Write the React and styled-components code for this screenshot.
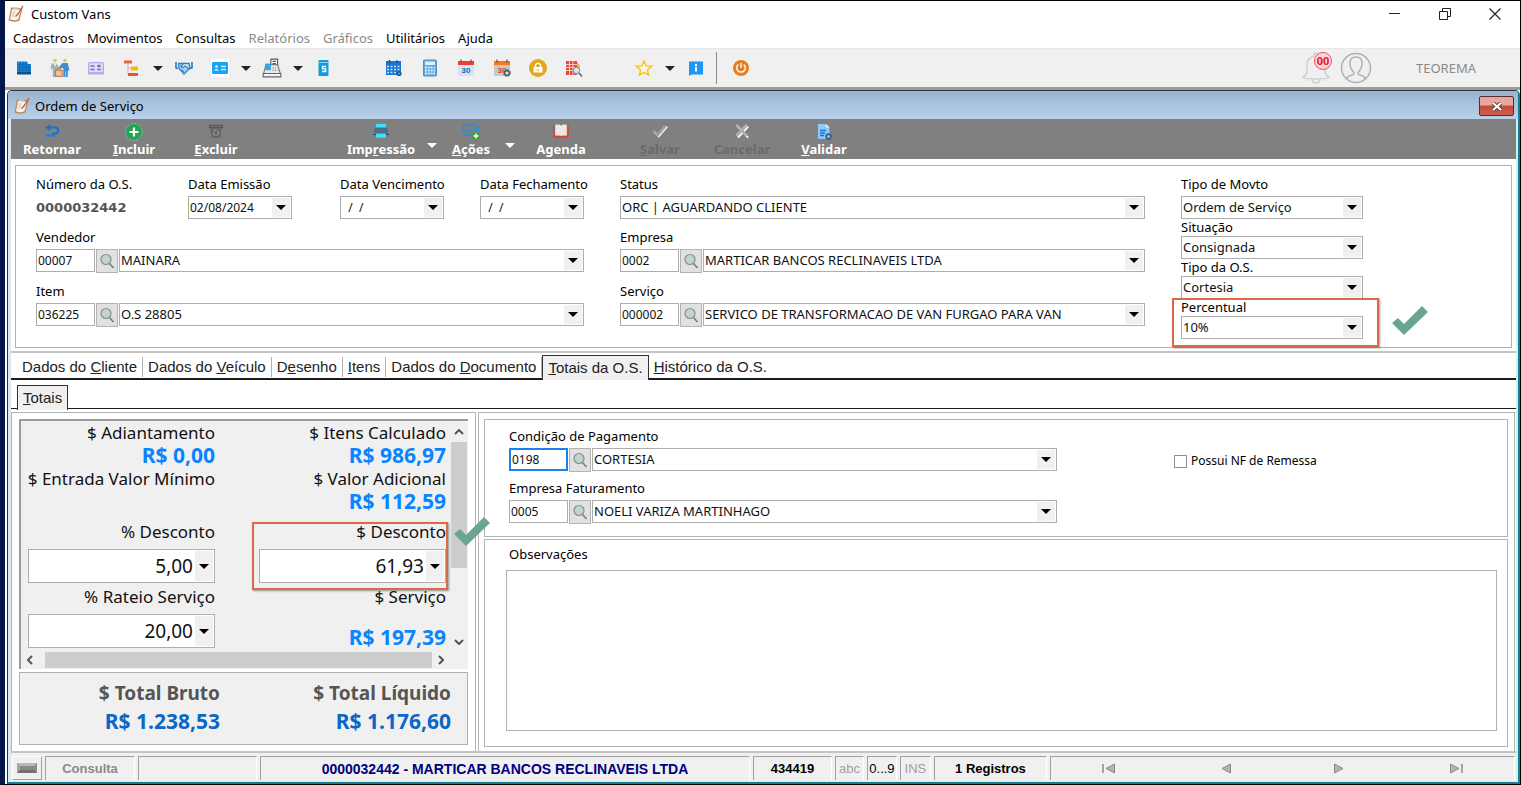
import React, { useState } from "react"
import styled, { createGlobalStyle, css } from "styled-components"

const ui = `"Noto Sans", "Open Sans", sans-serif`
const wide = `"DejaVu Sans", Verdana, sans-serif`
const sans = `"Liberation Sans", Arial, sans-serif`

// "&Incluir" -> underlined shortcut letter
const Accel = ({ text }) => {
  const i = text.indexOf("&")
  if (i < 0) return text
  return (
    <>
      {text.slice(0, i)}
      <u>{text[i + 1]}</u>
      {text.slice(i + 2)}
    </>
  )
}

const Icon = ({ size = 18, children, ...rest }) => (
  <svg width={size} height={size} viewBox="0 0 18 18" fill="none" aria-hidden="true" {...rest}>
    {children}
  </svg>
)

const NotepadIcon = () => (
  <Icon>
    <path d="M4 2.5 15.5 3.5 12.5 15.5 8 17 1.5 15.5Z" fill="#b98a55" />
    <path d="M5 4 14 4.5 11.5 14 8.5 15.5 3 14.5Z" fill="#f7f2ea" />
    <path d="M6.5 2 11 2.6 10.4 4.6 6 4.2Z" fill="#c9c4bb" />
    <path d="M16 1 11 9 8.5 11.5" stroke="#c05a3c" strokeWidth="1.3" />
    <path d="M5.5 7h3M5 9h3M4.6 11h3" stroke="#c9b8b0" strokeWidth=".8" />
  </Icon>
)
const BuildingIcon = () => (
  <Icon>
    <path d="M2 2.5h10l1 2.5h3v10H2Z" fill="#1b86d8" />
    <path d="M2 13h14v2.500H2Z" fill="#0c4f88" />
    <path d="M2 6h12M2 8.500h14M2 11h14M5 3v11M8 3v11M11 3v11M14 5v9" stroke="#0d62ab" strokeWidth=".8" />
  </Icon>
)
const PeopleIcon = () => (
  <Icon size={20}>
    <circle cx="4.500" cy="2.200" r="1.600" fill="#e2bd7a" />
    <circle cx="13.500" cy="2.200" r="1.600" fill="#e2bd7a" />
    <path d="M1.500 5H6l2 3 2.500-3h1l-2.500 4.500H7V17H5v-5h-.500v5h-2V9L1 10.500.500 9Z" fill="#9fb0a8" />
    <path d="M3.500 5 4.500 8 6 5Z" fill="#f2f6f5" />
    <path d="M11.500 4.500h4.500L17.500 11l-1.500.500V17h-2v-5h-.500v5h-1.500V9L9 9.500 8.500 8Z" fill="#3b8fd6" />
    <rect x="5" y="11" width="6" height="5.500" fill="#f0c39c" stroke="#c07a50" />
    <path d="M7 11V9.500h2V11" stroke="#c07a50" />
  </Icon>
)
const CardIcon = () => (
  <Icon>
    <rect x="1" y="3" width="16" height="12.5" rx="1.5" fill="#b5a8e4" />
    <rect x="2.2" y="4.2" width="13.6" height="9" fill="#e2dcfa" />
    <path d="M3.5 7h4M3.5 10.500h4M10 7h4M10 10.500h4M12 5.500v3" stroke="#7d6bc0" strokeWidth="1.4" />
  </Icon>
)
const TreeIcon = () => (
  <Icon>
    <path d="M5 5v10h4M5 9h4" stroke="#e0a9a0" />
    <rect x="1" y="1.500" width="8" height="3" fill="#f0632d" />
    <rect x="8" y="7.500" width="7" height="4" fill="#f2b90f" />
    <rect x="5" y="14" width="10" height="3" fill="#f0532d" />
  </Icon>
)
const HandshakeIcon = () => (
  <Icon>
    <path d="M1 3v6l2 .5M17 3v6l-2 .5" stroke="#2f76b8" strokeWidth="1.600" />
    <path d="M3.500 4.500h5L6 7.500l1.500 1 3-1.500 3.500 3-5 5-5-5.500Z" fill="#a8cdf0" stroke="#2f80c6" strokeWidth="1.300" />
    <path d="M8.500 4.500h5.500l1 5-1.500 1M6.500 11l2 2" stroke="#2f80c6" strokeWidth="1.500" />
  </Icon>
)
const IdIcon = () => (
  <Icon>
    <rect width="18" height="18" fill="#fff" />
    <rect x="1" y="3" width="16" height="12" rx="1" fill="#16a5f3" />
    <path d="M10 7.500h5M10 10.500h5" stroke="#cdeafd" strokeWidth="1.300" />
    <circle cx="5.500" cy="7.500" r="1.300" fill="#fff" />
    <path d="M3 11.500q2.500-3 5 0Z" fill="#fff" />
  </Icon>
)
const RegisterIcon = () => (
  <Icon size={20}>
    <path d="M8 1h6v6H8Z" fill="#fff" stroke="#555" />
    <path d="M9.500 3h3M9.500 5h3" stroke="#555" />
    <path d="M3.500 6H14l2.500 8h-15Z" fill="#e9e9e9" stroke="#777" />
    <path d="M3 5h5v6H3Z" fill="#3aa0e8" />
    <path d="M9.500 9h4M9.500 11h4.500" stroke="#777" strokeDasharray="1 1" />
    <path d="M1 14h16v3H1Z" fill="#f5f5f5" stroke="#666" />
  </Icon>
)
const BookSIcon = () => (
  <Icon>
    <rect x="3.500" y="1" width="10" height="16" rx="1" fill="#169bd9" />
    <path d="M3.500 3.500h10" stroke="#86d0f2" />
    <path d="M11 7.500H7.500v2.300h3.200V12.500H7" stroke="#fff" strokeWidth="1.300" />
  </Icon>
)
const GridIcon = () => (
  <Icon>
    <rect x="1" y="2" width="15" height="14" fill="#1976d2" />
    <path d="M2 7.500h13M2 10.500h13M2 13.500h13" stroke="#c6e2fa" strokeWidth="1.500" strokeDasharray="2 1.500" />
    <path d="M4.500 1v3M12 1v3" stroke="#0b4f98" strokeWidth="1.200" />
    <circle cx="14" cy="14.500" r="2.600" fill="#1c5f86" />
    <circle cx="14" cy="14.500" r=".8" fill="#9dd4ef" />
  </Icon>
)
const CalcIcon = () => (
  <Icon>
    <rect x="2.500" y="1" width="13" height="16" rx="1" fill="#5aa9e0" stroke="#4a94cc" />
    <rect x="4" y="2.500" width="10" height="3.500" fill="#dff0fb" />
    <path d="M4 8.500h10M4 11.500h10M4 14.500h10" stroke="#d4ebf9" strokeWidth="2" strokeDasharray="2 .8" />
    <path d="M12.500 6.500v2" stroke="#c9566b" />
  </Icon>
)
const DayText = styled.text`
  font: 700 8px ${sans};
`
const CalendarIcon = ({ top = "#ee4035", sheet = "#cfe6fa", ink = "#1a66ad", gear }) => (
  <Icon>
    <rect x="1" y="2" width="16" height="15" rx="1" fill={sheet} />
    <rect x="1" y="2" width="16" height="4" fill={top} />
    <path d="M4 .5v3M14 .5v3" stroke="#8a3e33" strokeWidth="1.200" />
    <DayText x="4.500" y="14" fill={ink}>30</DayText>
    {gear && (
      <>
        <circle cx="14" cy="14" r="2.400" stroke="#47626b" strokeWidth="1.600" fill="#dfe8ea" />
        <circle cx="14" cy="14" r="3.500" stroke="#47626b" strokeDasharray="1.400 1.400" />
      </>
    )}
  </Icon>
)
const LockIcon = () => (
  <Icon>
    <circle cx="9" cy="9" r="9" fill="#e3a71c" />
    <rect x="4.500" y="8" width="9" height="5.500" fill="#fff" />
    <path d="M6.500 8V6q2.500-3.500 5 0v2" stroke="#fff" strokeWidth="1.400" />
    <path d="M9 10v2" stroke="#e3a71c" strokeWidth="1.200" />
  </Icon>
)
const TableSearchIcon = () => (
  <Icon>
    <path d="M10 3q4 0 5 5l-1 5h-4Z" fill="#f0b21c" />
    <rect x="1" y="2" width="11" height="14" fill="#e5483d" />
    <path d="M1 5.500h11M1 8.500h11M1 11.500h11M4.500 2v14M8 2v14" stroke="#fbd5d1" strokeWidth=".9" />
    <circle cx="11.500" cy="11.500" r="3.200" fill="#cfe7f7" stroke="#6d8ea3" />
    <path d="m14 14 3 3.500" stroke="#54616a" strokeWidth="1.500" />
  </Icon>
)
const StarIcon = () => (
  <Icon>
    <path d="m9 2 2.100 4.900 5.300.5-4 3.500 1.200 5.200L9 13.400l-4.600 2.700 1.200-5.200-4-3.500 5.300-.5Z" fill="#fffbe8" stroke="#fbbf1e" strokeWidth="1.400" />
  </Icon>
)
const InfoIcon = () => (
  <Icon>
    <path d="M2 2.500h14v13H4.500L2 17Z" fill="#2196f3" />
    <path d="M9 8v4.500" stroke="#fff" strokeWidth="2" />
    <rect x="8" y="5" width="2" height="2" fill="#fff" />
  </Icon>
)
const PowerIcon = () => (
  <Icon>
    <circle cx="9" cy="9" r="8" fill="#e67e22" />
    <path d="M6.300 5.500a4.300 4.300 0 1 0 5.400 0M9 4v5" stroke="#fff" strokeWidth="1.400" />
  </Icon>
)
const BellIcon = () => (
  <svg width="28" height="32" viewBox="0 0 28 32" fill="none" aria-hidden="true">
    <path d="M12 4q0-3 2-3t2 3q7 2 7 9v6q0 4 4 6-1 2-13 2T1 25q4-2 4-6v-6Q5 6 12 4Z" stroke="#cfcfcf" strokeWidth="1.500" />
    <path d="M10 27q0 4 4 4t4-4" stroke="#cfcfcf" strokeWidth="1.500" />
  </svg>
)
const UserIcon = () => (
  <svg width="32" height="32" viewBox="0 0 32 32" fill="none" aria-hidden="true">
    <circle cx="16" cy="16" r="14.500" stroke="#a9b3b4" strokeWidth="1.500" />
    <path d="M7 27q0-3 5-4 3-.5 1.500-3-3.500-3.500-3.500-9 0-6 6-6t6 6q0 5.500-3.500 9-1.500 2.500 1.500 3 5 1 5 4" stroke="#a9b3b4" strokeWidth="1.500" />
  </svg>
)

const ReturnIcon = () => (
  <Icon size={16}>
    <path d="M3 5h10q3 0 3 3.500T12 12H9" stroke="#1673d0" strokeWidth="2.400" />
    <path d="M7 1v8L1.500 5Z" fill="#1673d0" />
    <path d="M2 14h10" stroke="#1673d0" strokeWidth="3" strokeDasharray="1.200 1" />
  </Icon>
)
const AddIcon = () => (
  <Icon>
    <circle cx="9" cy="9" r="8.300" fill="#23a455" stroke="#b5d9c1" strokeDasharray="1 1.500" />
    <path d="M9 4.500v9M4.500 9h9" stroke="#fff" strokeWidth="2.200" />
  </Icon>
)
const TrashIcon = () => (
  <Icon size={16}>
    <path d="M1 2h16v4H1Z" fill="#555" />
    <path d="M2.500 6h13l-1.500 11H4Z" fill="#676767" />
    <circle cx="9" cy="11" r="3" stroke="#9c9c9c" strokeWidth="1.200" strokeDasharray="4 1.200" />
    <path d="M2.500 4h13" stroke="#808080" />
  </Icon>
)
const PrinterIcon = () => (
  <Icon size={16}>
    <rect x="3.500" y="1" width="11" height="4" fill="#40e0ff" />
    <rect x="1.500" y="5.500" width="15" height="6.500" fill="#46708c" />
    <path d="M0 13h18" stroke="#173e58" />
    <rect x="3.500" y="12" width="11" height="4.500" fill="#40e0ff" />
  </Icon>
)
const ActionsIcon = () => (
  <Icon>
    <rect x="1" y="2" width="13" height="6" rx="1.500" stroke="#2f8bd8" strokeWidth="1.500" />
    <path d="M3.500 8.500v2q0 1.500 1.500 1.500h6M14 4.500h2.500V9" stroke="#2f8bd8" strokeWidth="1.500" />
    <circle cx="14" cy="13" r="4" fill="#3c9f43" />
    <path d="M14 10.500v5M11.500 13h5" stroke="#fff" strokeWidth="1.400" />
  </Icon>
)
const BookIcon = () => (
  <Icon size={16}>
    <path d="M1 3v12.500h7l1 1 1-1h7V3" stroke="#d9402f" strokeWidth="1.500" />
    <path d="M2.500 2q5-1 6.500 1 1.500-2 6.500-1v12H10l-1 1-1-1H2.500Z" fill="#efe9e4" />
  </Icon>
)
const SaveIcon = () => (
  <Icon size={16}>
    <path d="M3 10.500 7.500 15 17 4" stroke="#fff" strokeWidth="2" />
    <path d="M1.500 9 6.500 13.500 15 3.500" stroke="#a3a3a3" strokeWidth="3" />
  </Icon>
)
const CancelIcon = () => (
  <Icon size={16}>
    <path d="m4 4 12 12.500M16 4 4.500 16.500" stroke="#fff" strokeWidth="2" />
    <path d="m2.500 2 12 12.500M14.500 2 2.500 14.500" stroke="#b0b0b0" strokeWidth="3" />
  </Icon>
)
const ValidateIcon = () => (
  <Icon>
    <path d="M3 1h8l3.500 3.500V16H3Z" fill="#90c8f8" />
    <path d="M11 1v3.500h3.500Z" fill="#dff0ff" />
    <path d="M5 7.500h6M5 10h5M5 12.500h4" stroke="#1a72c4" strokeWidth="1.300" />
    <circle cx="13.500" cy="13.500" r="2.400" stroke="#2f6386" strokeWidth="1.600" fill="#7fc0ea" />
  </Icon>
)
const SearchIcon = () => (
  <Icon>
    <circle cx="8" cy="7.500" r="5" fill="#c3d3d4" stroke="#84908f" strokeWidth="1.200" />
    <path d="m11.500 11.500 4 4.500" stroke="#808080" strokeWidth="1.800" />
  </Icon>
)
const KeyboardIcon = () => (
  <svg width="20" height="10" viewBox="0 0 20 10" aria-hidden="true">
    <rect width="20" height="10" fill="#8a8a8a" />
    <path d="M0 0h20l-3 3H3Z" fill="#b9b9b9" />
    <path d="M0 0v10l3-3V3Z" fill="#a6a6a6" />
    <path d="M3 7h14l3 3H0Z" fill="#707070" />
  </svg>
)
const CheckMark = styled(({ className }) => (
  <svg className={className} width="38" height="32" viewBox="0 0 38 32" aria-hidden="true">
    <path d="m1 18 6-5 6 6L31 1l6 6-24 23Z" fill="#69a592" />
  </svg>
))`
  position: absolute;
  z-index: 3;
`
const NavGlyph = ({ flip, bar }) => (
  <svg width="14" height="11" viewBox="0 0 14 11" transform={flip ? "scale(-1 1)" : undefined} aria-hidden="true">
    {bar && <path d="M1 1v9" stroke="#8a8a8a" strokeWidth="1.500" />}
    <path d="M12.500 1v9L4 5.500Z" fill="#b4b4b4" stroke="#8a8a8a" />
  </svg>
)

const Caret = styled.span`
  width: 0;
  height: 0;
  border: 5px solid transparent;
  border-top-color: ${p => p.$color || "#000"};
  border-bottom: 0;
`

const MENUS = ["Cadastros", "Movimentos", "Consultas", "Relatórios", "Gráficos", "Utilitários", "Ajuda"]
const MENUS_OFF = ["Relatórios", "Gráficos"]

const TOOLS = [
  [
    { name: "Empresas", icon: <BuildingIcon /> },
    { name: "Clientes", icon: <PeopleIcon /> },
    { name: "Cartões", icon: <CardIcon /> },
    { name: "Estrutura", icon: <TreeIcon />, split: true },
    { name: "Negociações", icon: <HandshakeIcon /> },
    { name: "Identificação", icon: <IdIcon />, split: true },
    { name: "Caixa", icon: <RegisterIcon />, split: true },
    { name: "Serviços", icon: <BookSIcon /> },
  ],
  [
    { name: "Planilha", icon: <GridIcon /> },
    { name: "Calculadora", icon: <CalcIcon /> },
    { name: "Calendário", icon: <CalendarIcon /> },
    { name: "Agendamentos", icon: <CalendarIcon top="#f07a1c" sheet="#c9c9c9" ink="#e0402c" gear /> },
    { name: "Bloquear", icon: <LockIcon /> },
    { name: "Pesquisar tabela", icon: <TableSearchIcon /> },
  ],
  [
    { name: "Favoritos", icon: <StarIcon />, split: true },
    { name: "Informações", icon: <InfoIcon /> },
  ],
]

const ACTIONS = [
  [
    { text: "Retornar", icon: <ReturnIcon /> },
    { text: "&Incluir", icon: <AddIcon /> },
    { text: "&Excluir", icon: <TrashIcon /> },
  ],
  [
    { text: "Imp&ressão", icon: <PrinterIcon />, split: true },
    { text: "&Ações", icon: <ActionsIcon />, split: true, narrow: true },
    { text: "Agenda", icon: <BookIcon /> },
  ],
  [
    { text: "&Salvar", icon: <SaveIcon />, disabled: true },
    { text: "Cancelar", icon: <CancelIcon />, disabled: true },
    { text: "&Validar", icon: <ValidateIcon /> },
  ],
]

const TABS = [
  "Dados do &Cliente",
  "Dados do &Veículo",
  "D&esenho",
  "&Itens",
  "Dados do &Documento",
  "&Totais da O.S.",
  "&Histórico da O.S.",
]

const Select = ({ id, value }) => (
  <SelectBox>
    <select id={id} defaultValue={value}>
      <option>{value}</option>
    </select>
    <ArrowCell as="span">
      <Caret />
    </ArrowCell>
  </SelectBox>
)

const Combo = ({ id, value, large }) => (
  <ComboBox $large={large}>
    <input id={id} defaultValue={value} />
    <ArrowCell type="button" aria-label="Abrir">
      <Caret />
    </ArrowCell>
  </ComboBox>
)

const Lookup = ({ id, label, code, value, focused }) => (
  <Field>
    <label htmlFor={id}>{label}</label>
    <LookupRow>
      <CodeInput id={id} defaultValue={code} $focused={focused} />
      <SearchButton type="button" aria-label={`Pesquisar ${label}`}>
        <SearchIcon />
      </SearchButton>
      <SelectBox>
        <select aria-label={label} defaultValue={value}>
          <option>{value}</option>
        </select>
        <ArrowCell as="span">
          <Caret />
        </ArrowCell>
      </SelectBox>
    </LookupRow>
  </Field>
)

const App = () => {
  const [tab, setTab] = useState("&Totais da O.S.")

  return (
    <Desktop>
      <GlobalStyle />
      <TitleBar>
        <NotepadIcon />
        <h1>Custom Vans</h1>
        <WindowButtons>
          <button aria-label="Minimizar">
            <svg width="12" height="12" viewBox="0 0 12 12"><path d="M0 5.500h11" stroke="#222" /></svg>
          </button>
          <button aria-label="Restaurar">
            <svg width="12" height="12" viewBox="0 0 12 12" fill="none" stroke="#222">
              <path d="M.5 3.500h8v8h-8ZM3.500 3V.500h8v8H9" />
            </svg>
          </button>
          <button aria-label="Fechar">
            <svg width="12" height="12" viewBox="0 0 12 12"><path d="m.5.500 11 11M11.500.500l-11 11" stroke="#222" strokeWidth="1.200" /></svg>
          </button>
        </WindowButtons>
      </TitleBar>
      <MenuBar>
        {MENUS.map(m => (
          <button key={m} disabled={MENUS_OFF.includes(m)}>{m}</button>
        ))}
      </MenuBar>
      <Toolbar>
        {TOOLS.map((group, i) => (
          <ToolGroup key={i}>
            {group.map(t => (
              <React.Fragment key={t.name}>
                <ToolButton aria-label={t.name}>{t.icon}</ToolButton>
                {t.split && (
                  <SplitButton aria-label={`Opções de ${t.name}`}>
                    <Caret $color="#222" />
                  </SplitButton>
                )}
              </React.Fragment>
            ))}
          </ToolGroup>
        ))}
        <Divider />
        <ToolButton aria-label="Sair"><PowerIcon /></ToolButton>
        <Account>
          <BellButton aria-label="Notificações">
            <BellIcon />
            <Badge>00</Badge>
          </BellButton>
          <UserIcon />
          <span>TEOREMA</span>
        </Account>
      </Toolbar>

      <ChildWindow>
        <ChildTitle>
          <NotepadIcon />
          <h2>Ordem de Serviço</h2>
          <CloseButton aria-label="Fechar janela">
            <svg width="12" height="9" viewBox="0 0 12 9">
              <path d="m2 1 8 7M10 1 2 8" stroke="#5b3a3a" strokeWidth="4" />
              <path d="m2 1 8 7M10 1 2 8" stroke="#fff" strokeWidth="2.200" />
            </svg>
          </CloseButton>
        </ChildTitle>
        <ActionBar>
          {ACTIONS.map((group, i) => (
            <ActionGroup key={i}>
              {group.map(a => (
                <React.Fragment key={a.text}>
                  <ActionButton disabled={a.disabled} $narrow={a.narrow}>
                    {a.icon}
                    <span><Accel text={a.text} /></span>
                  </ActionButton>
                  {a.split && (
                    <ActionSplit aria-label="Mais opções"><Caret $color="#fff" /></ActionSplit>
                  )}
                </React.Fragment>
              ))}
            </ActionGroup>
          ))}
        </ActionBar>

        <Header>
          <HeaderForm>
            <Stack>
              <DateRow>
                <Field>
                  <label htmlFor="numero">Número da O.S.</label>
                  <OrderNumber id="numero">0000032442</OrderNumber>
                </Field>
                <Field>
                  <label htmlFor="emissao">Data Emissão</label>
                  <Combo id="emissao" value="02/08/2024" />
                </Field>
                <Field>
                  <label htmlFor="vencimento">Data Vencimento</label>
                  <Combo id="vencimento" value="  /  /" />
                </Field>
                <Field>
                  <label htmlFor="fechamento">Data Fechamento</label>
                  <Combo id="fechamento" value="  /  /" />
                </Field>
              </DateRow>
              <Lookup id="vendedor" label="Vendedor" code="00007" value="MAINARA" />
              <Lookup id="item" label="Item" code="036225" value="O.S 28805" />
            </Stack>
            <Stack>
              <Field>
                <label htmlFor="status">Status</label>
                <Select id="status" value="ORC | AGUARDANDO CLIENTE" />
              </Field>
              <Lookup id="empresa" label="Empresa" code="0002" value="MARTICAR BANCOS RECLINAVEIS LTDA" />
              <Lookup id="servico" label="Serviço" code="000002" value="SERVICO DE TRANSFORMACAO DE VAN FURGAO PARA VAN" />
            </Stack>
            <TypeColumn>
              <Field>
                <label htmlFor="movto">Tipo de Movto</label>
                <Select id="movto" value="Ordem de Serviço" />
              </Field>
              <Field $compact>
                <label htmlFor="situacao">Situação</label>
                <Select id="situacao" value="Consignada" />
              </Field>
              <Field $compact>
                <label htmlFor="tipo">Tipo da O.S.</label>
                <Select id="tipo" value="Cortesia" />
              </Field>
              <Field $compact>
                <label htmlFor="percentual">Percentual</label>
                <Select id="percentual" value="10%" />
                <PercentMark />
                <PercentCheck />
              </Field>
            </TypeColumn>
          </HeaderForm>
        </Header>

        <Tabs role="tablist">
          {TABS.map(t => (
            <Tab key={t} role="tab" aria-selected={t === tab} $active={t === tab} onClick={() => setTab(t)}>
              <Accel text={t} />
            </Tab>
          ))}
        </Tabs>
        <SubTabs role="tablist">
          <Tab role="tab" aria-selected $active><Accel text="&Totais" /></Tab>
        </SubTabs>

        <Content>
          <Side>
            <ScrollBox>
              <Amounts>
                <Amount>
                  <span>$ Adiantamento</span>
                  <strong>R$ 0,00</strong>
                </Amount>
                <Amount>
                  <span>$ Itens Calculado</span>
                  <strong>R$ 986,97</strong>
                </Amount>
                <Amount>
                  <span>$ Entrada Valor Mínimo</span>
                </Amount>
                <Amount>
                  <span>$ Valor Adicional</span>
                  <strong>R$ 112,59</strong>
                </Amount>
                <Amount>
                  <label htmlFor="pdesc">% Desconto</label>
                  <Combo id="pdesc" value="5,00" large />
                </Amount>
                <Amount>
                  <label htmlFor="vdesc">$ Desconto</label>
                  <Combo id="vdesc" value="61,93" large />
                  <DiscountMark />
                  <DiscountCheck />
                </Amount>
                <Amount>
                  <label htmlFor="rateio">% Rateio Serviço</label>
                  <Combo id="rateio" value="20,00" large />
                </Amount>
                <Amount $bottom>
                  <span>$ Serviço</span>
                  <strong>R$ 197,39</strong>
                </Amount>
              </Amounts>
              <VScroll>
                <svg width="10" height="6" viewBox="0 0 10 6" fill="none"><path d="m1 5 4-4 4 4" stroke="#555" strokeWidth="2" /></svg>
                <i />
                <svg width="10" height="6" viewBox="0 0 10 6" fill="none"><path d="m1 1 4 4 4-4" stroke="#555" strokeWidth="2" /></svg>
              </VScroll>
              <HScroll>
                <svg width="6" height="10" viewBox="0 0 6 10" fill="none"><path d="M5 1 1 5l4 4" stroke="#555" strokeWidth="2" /></svg>
                <i />
                <svg width="6" height="10" viewBox="0 0 6 10" fill="none"><path d="m1 1 4 4-4 4" stroke="#555" strokeWidth="2" /></svg>
              </HScroll>
            </ScrollBox>
            <Totals>
              <div>
                <span>$ Total Bruto</span>
                <strong>R$ 1.238,53</strong>
              </div>
              <div>
                <span>$ Total Líquido</span>
                <strong>R$ 1.176,60</strong>
              </div>
            </Totals>
          </Side>
          <Main>
            <Payment>
              <PaymentFields>
                <Lookup id="cond" label="Condição de Pagamento" code="0198" value="CORTESIA" focused />
                <Lookup id="fat" label="Empresa Faturamento" code="0005" value="NOELI VARIZA MARTINHAGO" />
              </PaymentFields>
              <CheckLabel>
                <input type="checkbox" />
                Possui NF de Remessa
              </CheckLabel>
            </Payment>
            <Notes>
              <label htmlFor="obs">Observações</label>
              <textarea id="obs" />
            </Notes>
          </Main>
        </Content>

        <StatusBar>
          <StatusButton aria-label="Teclado"><KeyboardIcon /></StatusButton>
          <StatusCell $width="90px" $color="#8a8a8a">Consulta</StatusCell>
          <StatusCell $width="119px" />
          <StatusCell $grow={490} $color="#000080">0000032442 - MARTICAR BANCOS RECLINAVEIS LTDA</StatusCell>
          <StatusCell $width="79px">434419</StatusCell>
          <StatusCell $width="29px" $color="#a0a0a0" $light>abc</StatusCell>
          <StatusCell $width="30px" $light>0...9</StatusCell>
          <StatusCell $width="31px" $color="#a0a0a0" $light>INS</StatusCell>
          <StatusCell $width="113px">1 Registros</StatusCell>
          <Pager $grow={465}>
            <button aria-label="Primeiro"><NavGlyph bar /></button>
            <button aria-label="Anterior"><NavGlyph /></button>
            <button aria-label="Próximo"><NavGlyph flip /></button>
            <button aria-label="Último"><NavGlyph flip bar /></button>
          </Pager>
        </StatusBar>
      </ChildWindow>
    </Desktop>
  )
}

const GlobalStyle = createGlobalStyle`
  *, *::before, *::after {
    box-sizing: border-box;
  }
  body {
    margin: 0;
    background: #000;
    color: #000;
    font-family: ${ui};
    font-size: 13px;
  }
  h1, h2 {
    margin: 0;
    font-size: 13px;
    font-weight: 400;
  }
  button {
    padding: 0;
    border: 0;
    background: transparent;
    color: inherit;
    font: inherit;
  }
  input, select, textarea {
    font: inherit;
    color: #111;
    outline: 0;
  }
  svg {
    display: block;
    flex: none;
  }
`

const Desktop = styled.div`
  display: flex;
  flex-direction: column;
  min-height: 100vh;
  border: 1px solid #000;
  border-left: 5px solid #03164a;
  background: #fff;
`

const TitleBar = styled.header`
  display: flex;
  align-items: center;
  gap: 6px;
  height: 26px;
  padding-left: 2px;
`

const WindowButtons = styled.div`
  display: flex;
  margin-left: auto;
  button {
    display: grid;
    place-items: center;
    width: 50px;
    height: 24px;
  }
`

const MenuBar = styled.nav`
  display: flex;
  gap: 13px;
  height: 22px;
  padding: 0 8px;
  border-bottom: 1px solid #e8e8e8;
  button:disabled {
    color: #8a8a8a;
  }
`

const Toolbar = styled.div`
  display: flex;
  align-items: center;
  height: 41px;
  padding-left: 1px;
  border-bottom: 3px solid #9c9c9c;
  background: #f0f0f0;
`

const ToolGroup = styled.div`
  display: flex;
  & + & {
    margin-left: 34px;
  }
`

const ToolButton = styled.button`
  display: grid;
  place-items: center;
  width: 36px;
  height: 32px;
`

const SplitButton = styled(ToolButton)`
  width: 16px;
`

const Divider = styled.span`
  width: 1px;
  height: 32px;
  margin: 0 6px 0 2px;
  background: #8a8a8a;
`

const Account = styled.div`
  display: flex;
  align-items: center;
  gap: 10px;
  margin-left: auto;
  padding-right: 44px;
  color: #8a8a8a;
  > span {
    margin-left: 34px;
    line-height: 20px;
  }
`

const BellButton = styled.button`
  position: relative;
`

const Badge = styled.span`
  position: absolute;
  top: 0;
  right: -2px;
  display: grid;
  place-items: center;
  width: 18px;
  height: 18px;
  border: 1px solid #ef5350;
  border-radius: 50%;
  background: #f9d9d9;
  color: #f0123c;
  font-size: 11px;
  font-weight: 700;
  line-height: 16px;
`

const ChildWindow = styled.main`
  flex: 1;
  display: flex;
  flex-direction: column;
  margin-left: 2px;
  border: 1px solid #333;
  border-right: 2px solid #14808f;
  border-bottom: 2px solid #14808f;
  border-radius: 5px 5px 0 0;
  padding: 0 2px 1px 3px;
  background: #dbe9f7;
`

const ChildTitle = styled.div`
  display: flex;
  align-items: center;
  gap: 4px;
  height: 28px;
  margin: 0 -2px 0 -3px;
  padding: 2px 4px 0 5px;
  border-radius: 4px 4px 0 0;
  background: linear-gradient(#99b4d1, #b9d1ea);
`

const CloseButton = styled.button`
  display: grid;
  place-items: center;
  width: 35px;
  height: 20px;
  margin-left: auto;
  border: 1px solid #5a2a2f;
  border-radius: 2px;
  background: linear-gradient(#e6a79c 0 45%, #c04a35 50%, #d2604c);
`

const ActionBar = styled.div`
  display: flex;
  height: 40px;
  background: #808080;
  color: #fff;
`

const ActionGroup = styled.div`
  display: flex;
  & + & {
    margin-left: 83px;
  }
  & + & + & {
    margin-left: 17px;
  }
`

const ActionButton = styled.button`
  display: flex;
  flex-direction: column;
  align-items: center;
  justify-content: space-between;
  width: ${p => (p.$narrow ? 58 : 82)}px;
  padding: 4px 0 2px;
  font: 700 13px/16px ${ui};
  &:disabled {
    color: #6b6b6b;
  }
`

const ActionSplit = styled.button`
  display: grid;
  place-items: center;
  width: 20px;
  padding-top: 12px;
`

const Header = styled.section`
  padding: 6px 4px 3px 4px;
  border-bottom: 2px solid #c4c4c4;
  background: #fff;
`

const HeaderForm = styled.div`
  display: grid;
  grid-template-columns: minmax(0, 548fr) minmax(0, 525fr) 182px;
  gap: 36px;
  padding: 8px 148px 8px 20px;
  border: 1px solid #b0b0b0;
`

const Stack = styled.div`
  display: flex;
  flex-direction: column;
  gap: 8px;
`

const TypeColumn = styled(Stack)`
  gap: 0;
`

const DateRow = styled.div`
  display: grid;
  grid-template-columns: 152fr 152fr 140fr 104px;
`

const Field = styled.div`
  position: relative;
  label {
    display: block;
    margin-bottom: ${p => (p.$compact ? 0 : 2)}px;
    font: 13px/${p => (p.$compact ? 17 : 20)}px ${ui};
    white-space: nowrap;
  }
`

const OrderNumber = styled.output`
  display: block;
  color: #555;
  font: 700 13px/23px ${wide};
`

const ArrowCell = styled.button`
  display: grid;
  place-items: center;
  width: 18px;
  margin: 1px;
  background: #f0f0f0;
`

const SelectBox = styled.div`
  display: grid;
  height: 23px;
  border: 1px solid #adadad;
  background: #fff;
  select,
  > span {
    grid-area: 1 / 1;
  }
  select {
    min-width: 0;
    padding: 0 22px 2px 1px;
    border: 0;
    background: transparent;
    appearance: none;
    font-size: 13px;
  }
  > span {
    justify-self: end;
    pointer-events: none;
  }
`

const ComboBox = styled.div`
  display: flex;
  width: 104px;
  height: 23px;
  border: 1px solid #adadad;
  background: #fff;
  input {
    flex: 1;
    min-width: 0;
    padding: 0 1px;
    border: 0;
    font-size: 12px;
  }
  ${p =>
    p.$large &&
    css`
      width: 100%;
      height: 34px;
      input {
        font-size: 19px;
        text-align: right;
      }
    `}
`

const LookupRow = styled.div`
  display: grid;
  grid-template-columns: 59px 22px minmax(0, 1fr);
  gap: 1px;
`

const CodeInput = styled.input`
  min-width: 0;
  height: 23px;
  padding: 0 1px;
  border: 1px solid #adadad;
  font-size: 12px;
  ${p =>
    p.$focused &&
    css`
      border: 2px solid #1a7ff0;
    `}
`

const SearchButton = styled.button`
  display: grid;
  place-items: center;
  height: 24px;
  border: 1px solid #b4b4b4;
  background: #e1e1e1;
`

const Mark = styled.span`
  position: absolute;
  z-index: 2;
  border: 2px solid #dc6a49;
  box-shadow: 1px 1px 2px rgba(0, 0, 0, 0.4);
  pointer-events: none;
`

const PercentMark = styled(Mark)`
  inset: -1px -16px -8px -9px;
`

const PercentCheck = styled(CheckMark)`
  right: -66px;
  top: 6px;
`

const DiscountMark = styled(Mark)`
  inset: 2px -2px -5px -7px;
`

const DiscountCheck = styled(CheckMark)`
  right: -45px;
  top: -4px;
`

const Tabs = styled.div`
  display: flex;
  align-items: flex-end;
  height: 27px;
  padding-left: 6px;
  border-bottom: 2px solid #1c1c1c;
  background: #fff;
`

const Tab = styled.button`
  position: relative;
  height: 20px;
  margin-bottom: 1px;
  padding: 0 5px;
  border-right: 1px solid #b0b0b0;
  color: #222;
  font: 15px/20px ${sans};
  white-space: nowrap;
  &:last-child {
    border-right: 0;
  }
  ${p =>
    p.$active &&
    css`
      &,
      &:last-child {
        height: 25px;
        margin-bottom: -2px;
        border: 1px solid #333;
        border-bottom: 0;
        background: #f0f0f0;
      }
    `}
`

const SubTabs = styled(Tabs)`
  height: 29px;
  border-bottom-width: 1px;
`

const Content = styled.section`
  flex: 1;
  display: grid;
  grid-template-columns: 465px minmax(0, 1fr);
  gap: 2px;
  padding: 3px 1px 0 0;
  background: #fff;
`

const Side = styled.div`
  display: flex;
  flex-direction: column;
  gap: 3px;
  padding: 6px 7px;
  border: 1px solid #b4b4b4;
  border-bottom: 0;
`

const ScrollBox = styled.div`
  flex: 1;
  display: grid;
  grid-template-columns: 1fr 18px;
  grid-template-rows: 1fr 18px;
  border: 2px solid #9a9a9a;
  border-right: 0;
  border-bottom: 0;
  background: #f0f0f0;
`

const Amounts = styled.div`
  display: grid;
  grid-template-columns: 187px 187px;
  grid-template-rows: 46px 53px 65px 65px;
  column-gap: 44px;
  padding-left: 7px;
`

const Amount = styled.div`
  position: relative;
  display: flex;
  flex-direction: column;
  align-items: flex-end;
  color: #111;
  font: 17px/23px ${ui};
  white-space: nowrap;
  strong {
    margin-top: ${p => (p.$bottom ? 18 : 0)}px;
    color: #0a84ff;
    font: 700 21px/23px ${ui};
  }
  > div {
    margin-top: 6px;
  }
`

const VScroll = styled.div`
  display: grid;
  grid-template-rows: 21px 126px 1fr;
  justify-items: center;
  align-items: center;
  i {
    width: 16px;
    height: 100%;
    background: #cdcdcd;
  }
  svg:last-child {
    align-self: end;
    margin-bottom: 6px;
  }
`

const HScroll = styled.div`
  display: flex;
  align-items: center;
  gap: 6px;
  padding: 0 6px;
  i {
    flex: 1;
    height: 16px;
    margin-left: 6px;
    background: #cdcdcd;
  }
`

const Totals = styled.div`
  display: grid;
  grid-template-columns: 192px 1fr;
  padding: 6px 16px 9px 8px;
  border: 1px solid #b0b0b0;
  background: #f0f0f0;
  div {
    display: flex;
    flex-direction: column;
    align-items: flex-end;
    font: 700 19px/28px ${ui};
    color: #555;
  }
  strong {
    color: #0a66c8;
    font-size: 21px;
    font-weight: 700;
  }
`

const Main = styled.div`
  display: flex;
  flex-direction: column;
  gap: 2px;
  padding: 6px 6px 4px 5px;
  border: 1px solid #b4b4b4;
  border-bottom: 0;
`

const Payment = styled.div`
  display: grid;
  grid-template-columns: minmax(0, 548fr) minmax(0, 324fr);
  column-gap: 117px;
  padding: 6px 9px 12px 24px;
  border: 1px solid #b4b4b4;
`

const PaymentFields = styled(Stack)`
  gap: 6px;
`

const CheckLabel = styled.label`
  display: flex;
  align-items: center;
  align-self: start;
  gap: 4px;
  margin-top: 25px;
  font-size: 12px;
  line-height: 20px;
  input {
    width: 13px;
    height: 13px;
    margin: 0;
    border: 1px solid #8f8f8f;
    background: #fff;
    appearance: none;
  }
`

const Notes = styled.div`
  flex: 1;
  display: flex;
  flex-direction: column;
  gap: 6px;
  padding: 4px 10px 15px 21px;
  border: 1px solid #b4b4b4;
  label {
    padding-left: 3px;
    font: 13px/20px ${ui};
  }
  textarea {
    flex: 1;
    border: 1px solid #b0b0b0;
    resize: none;
  }
`

const StatusBar = styled.footer`
  display: flex;
  gap: 3px;
  height: 30px;
  padding: 3px 1px 1px 1px;
  border-top: 2px solid #c4c4c4;
  background: #f0f0f0;
`

const StatusButton = styled.button`
  display: grid;
  place-items: center;
  width: 30px;
  border: 1px solid #fff;
  border-right-color: #a0a0a0;
  border-bottom-color: #a0a0a0;
`

const StatusCell = styled.div`
  flex: ${p => (p.$grow ? `${p.$grow} 1 0` : `0 0 ${p.$width}`)};
  display: flex;
  align-items: center;
  justify-content: center;
  border-top: 1px solid #a0a0a0;
  border-left: 1px solid #a0a0a0;
  border-right: 1px solid #fff;
  color: ${p => p.$color || "#000"};
  font: ${p => (p.$light ? 400 : 700)} ${p => (p.$grow ? 14 : 13)}px ${sans};
  white-space: nowrap;
`

const Pager = styled(StatusCell)`
  justify-content: space-around;
  button {
    width: 40px;
    display: grid;
    place-items: center;
  }
`

export default App
